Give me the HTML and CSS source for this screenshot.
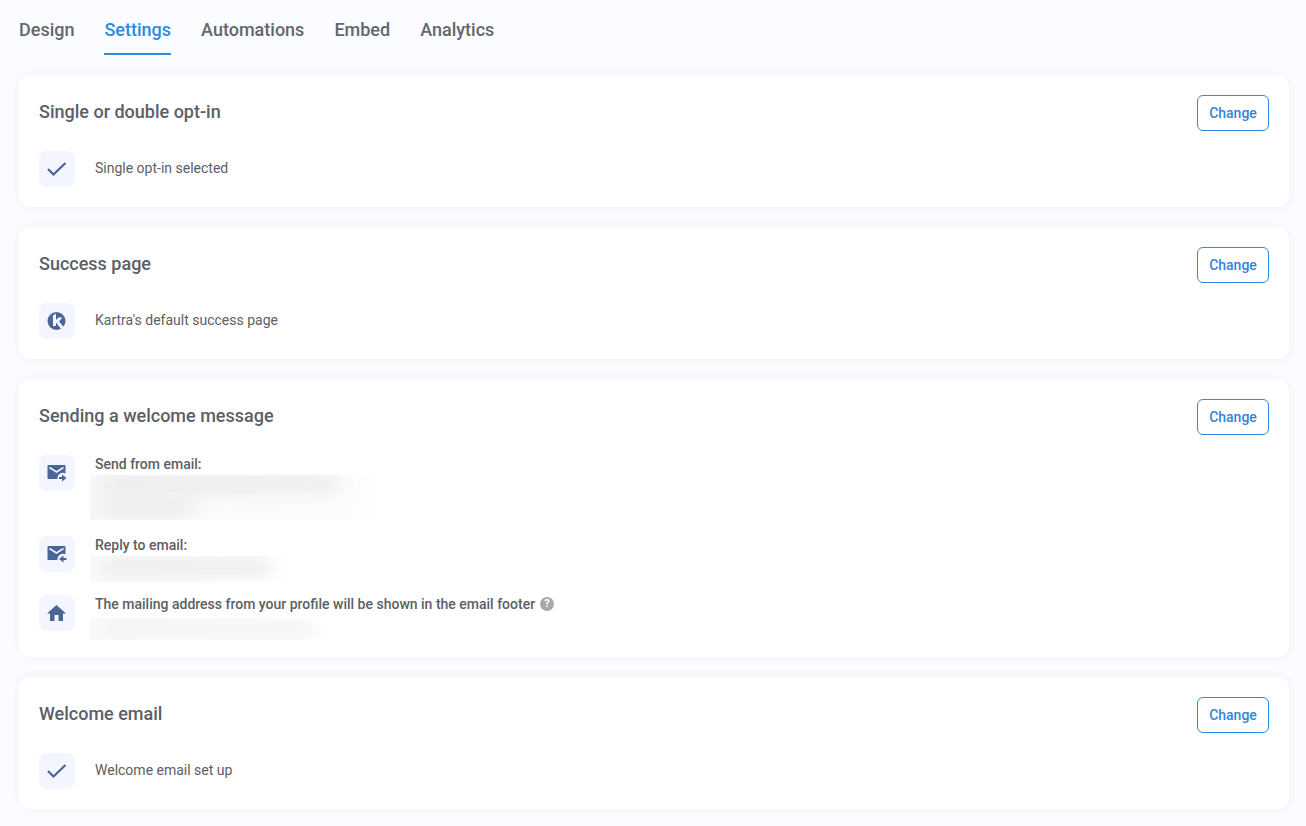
FILE: index.html
```html
<!DOCTYPE html>
<html lang="en">
  <head>
    <meta charset="UTF-8">
    <meta name="viewport" content="width=device-width, initial-scale=1.0">
    <title>Form settings</title>
    <link rel="stylesheet" href="styles.css">
  </head>
  <body>
    <nav class="tabs">
      <a href="#design">Design</a>
      <a href="#settings" class="active" aria-current="page">Settings</a>
      <a href="#automations">Automations</a>
      <a href="#embed">Embed</a>
      <a href="#analytics">Analytics</a>
    </nav>
    <main>
      <section class="card">
        <div class="card-head">
          <h2>Single or double opt-in</h2>
          <button type="button">Change</button>
        </div>
        <div class="item">
          <span class="icon">
            <svg viewBox="0 0 18 18"><path d="M0 9l5.500 5.500L17.500 3" fill="none" stroke="currentColor" stroke-width="2.200"/></svg>
          </span>
          <p class="value">Single opt-in selected</p>
        </div>
      </section>

      <section class="card">
        <div class="card-head">
          <h2>Success page</h2>
          <button type="button">Change</button>
        </div>
        <div class="item">
          <span class="icon">
            <svg viewBox="0 0 18 18">
              <circle cx="8.500" cy="9" r="9" fill="currentColor"/>
              <path d="M4.500 4L8 1.500V8L10.500 5.500H14.500L11 9.500L16.500 16L14 18L8 10.500V14H5V5Z" fill="#f3f6ff"/>
            </svg>
          </span>
          <p class="value">Kartra's default success page</p>
        </div>
      </section>

      <section class="card">
        <div class="card-head">
          <h2>Sending a welcome message</h2>
          <button type="button">Change</button>
        </div>
        <div class="item">
          <span class="icon">
            <svg viewBox="0 0 18 18">
              <path d="M.5 1h16a1 1 0 0 1 1 1v7.500a5.500 5.500 0 0 0-8 5.500H.5a1 1 0 0 1-1-1V2a1 1 0 0 1 1-1z" fill="currentColor"/>
              <path d="M1.500 3.500l7 4.500 7-4.500" fill="none" stroke="#f3f6ff" stroke-width="1.500"/>
              <path d="M11 13h3v-2.500l4.500 3.500-4.500 3.500V15h-3z" fill="currentColor"/>
            </svg>
          </span>
          <div class="details">
            <h3>Send from email:</h3>
            <div class="hidden-value sender"></div>
          </div>
        </div>
        <div class="item">
          <span class="icon">
            <svg viewBox="0 0 18 18">
              <path d="M.5 1h16a1 1 0 0 1 1 1v7.500a5.500 5.500 0 0 0-8 5.500H.5a1 1 0 0 1-1-1V2a1 1 0 0 1 1-1z" fill="currentColor"/>
              <path d="M1.500 3.500l7 4.500 7-4.500" fill="none" stroke="#f3f6ff" stroke-width="1.500"/>
              <path d="M18.500 13h-3v-2.500L11 14l4.500 3.500V15h3z" fill="currentColor"/>
            </svg>
          </span>
          <div class="details">
            <h3>Reply to email:</h3>
            <div class="hidden-value reply"></div>
          </div>
        </div>
        <div class="item">
          <span class="icon">
            <svg viewBox="0 0 18 18"><path d="M8.500 1l9.500 8.500h-3V17h-4.500v-6h-4v6H2V9.500h-3z" fill="currentColor"/></svg>
          </span>
          <div class="details">
            <h3>The mailing address from your profile will be shown in the email footer <button type="button" class="help" aria-label="Help">?</button></h3>
            <div class="hidden-value address"></div>
          </div>
        </div>
      </section>

      <section class="card">
        <div class="card-head">
          <h2>Welcome email</h2>
          <button type="button">Change</button>
        </div>
        <div class="item">
          <span class="icon">
            <svg viewBox="0 0 18 18"><path d="M0 9l5.500 5.500L17.500 3" fill="none" stroke="currentColor" stroke-width="2.200"/></svg>
          </span>
          <p class="value">Welcome email set up</p>
        </div>
      </section>
    </main>
  </body>
</html>
```
FILE: styles.css
```css
* {
  box-sizing: border-box;
}
body {
  margin: 0;
  padding: 18px 17px 17px 19px;
  background: #fbfcff;
  color: #5b6065;
  font-family: Roboto, "Liberation Sans", sans-serif;
  font-size: 14px;
  line-height: 20px;
}
h2, h3, p {
  margin: 0;
}
.tabs {
  display: flex;
  gap: 30px;
  margin-bottom: 20px;
}
.tabs a {
  padding-bottom: 11px;
  border-bottom: 2px solid transparent;
  color: #63676c;
  font-size: 18px;
  font-weight: 500;
  line-height: 24px;
  text-decoration: none;
}
.tabs .active {
  color: #2e8ae0;
  border-color: #2e8ae0;
}
main {
  display: grid;
  gap: 20px;
}
.card {
  display: flex;
  flex-direction: column;
  gap: 16px;
  padding: 20px;
  background: #fff;
  border-radius: 10px;
  box-shadow: 0 0 10px rgba(60, 70, 110, 0.07);
}
.card-head {
  display: flex;
  justify-content: space-between;
  margin-bottom: 4px;
}
.card-head h2 {
  padding-top: 5px;
  font-size: 18px;
  font-weight: 500;
  line-height: 24px;
}
.card-head button {
  width: 72px;
  height: 36px;
  padding: 0;
  border: 1px solid #2e8ae0;
  border-radius: 6px;
  background: #fff;
  color: #3584da;
  font: inherit;
  font-weight: 500;
  cursor: pointer;
}
.item {
  display: flex;
  align-items: flex-start;
  gap: 20px;
}
.icon {
  display: flex;
  flex-shrink: 0;
  align-items: center;
  justify-content: center;
  width: 36px;
  height: 36px;
  border-radius: 8px;
  background: #f3f6ff;
  color: #4a6596;
}
.icon svg {
  width: 18px;
  height: 18px;
  overflow: visible;
}
.value {
  padding-top: 7px;
}
.details h3 {
  display: flex;
  align-items: center;
  gap: 5px;
  padding-bottom: 2px;
  font-size: 14px;
  font-weight: 500;
  line-height: 18px;
}
.help {
  width: 14px;
  height: 14px;
  padding: 0;
  border: 0;
  border-radius: 50%;
  background: #a5a9ae;
  color: #fff;
  font: inherit;
  font-size: 11px;
  font-weight: 700;
  line-height: 14px;
}

/* values masked behind a soft smear */
.hidden-value {
  position: relative;
  overflow: hidden;
  margin-left: -5px;
  background: linear-gradient(to right, #fafafa, #fff);
}
.hidden-value::before,
.hidden-value::after {
  content: "";
  position: absolute;
  left: 12px;
  height: 12px;
  border-radius: 6px;
  background: #e4e5e5;
  filter: blur(9px);
}
.sender {
  width: 280px;
  height: 45px;
  background: linear-gradient(to right, #f8f8f8, #fdfdfd);
}
.sender::before {
  top: 3px;
  width: 238px;
}
.sender::after {
  top: 26px;
  width: 90px;
}
.reply {
  width: 208px;
  height: 26px;
  margin-bottom: -3px;
}
.reply::before {
  top: 5px;
  width: 170px;
}
.address {
  width: 238px;
  height: 22px;
  margin-top: 3px;
  margin-bottom: -3px;
}
.address::before {
  top: 5px;
  width: 212px;
  background: #edefef;
}
```
